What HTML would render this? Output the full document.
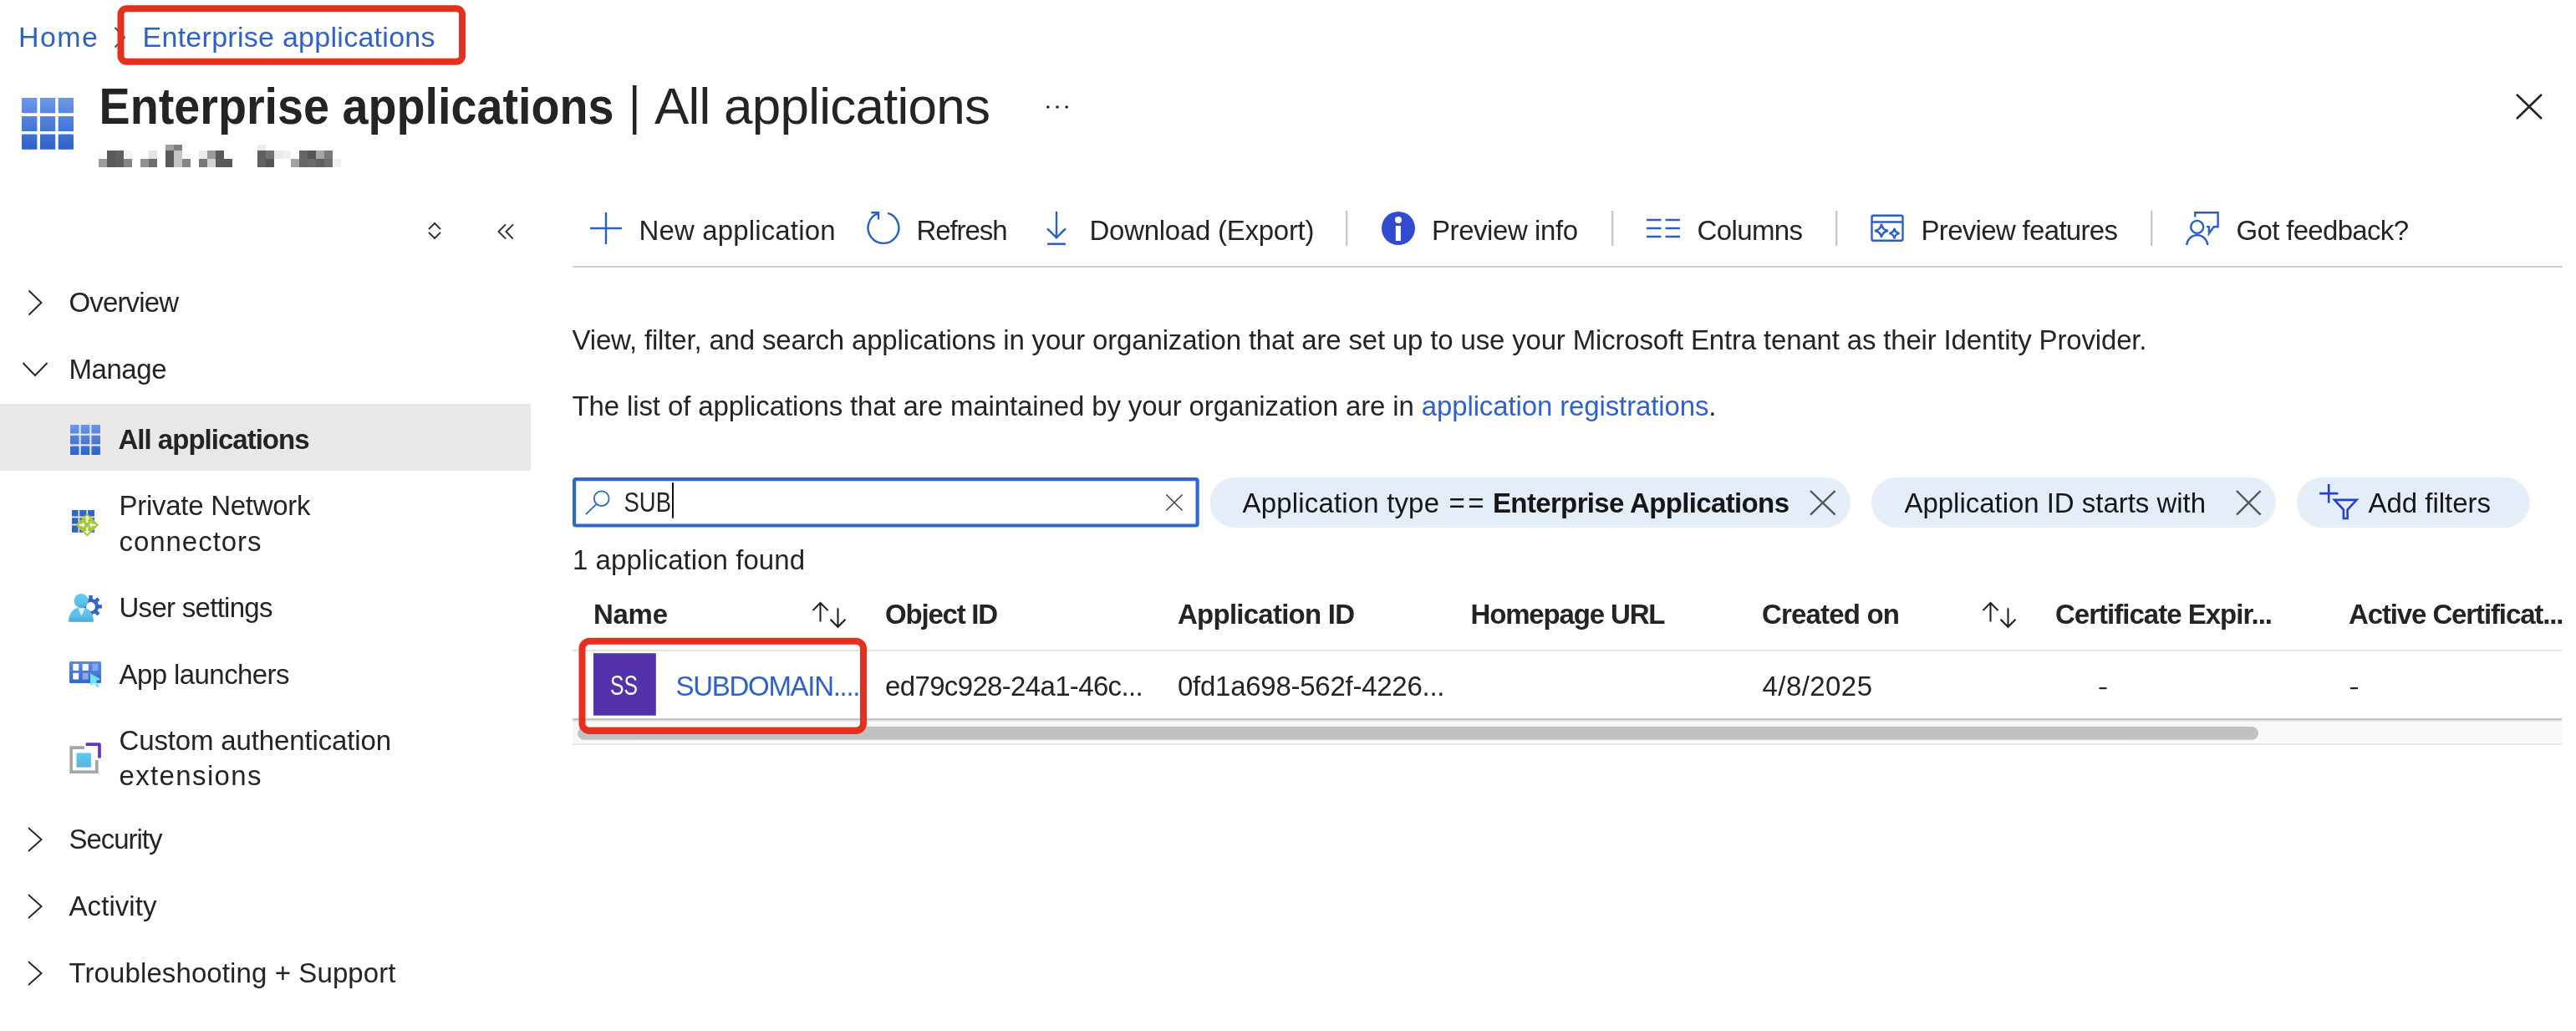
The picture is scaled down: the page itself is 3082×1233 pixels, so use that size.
<!DOCTYPE html>
<html><head><meta charset="utf-8">
<style>
html,body{margin:0;padding:0;background:#fff;width:3082px;height:1233px;overflow:hidden}
svg{display:block;will-change:transform;font-family:"Liberation Sans",sans-serif}
.t{fill:#242424;font-size:33px}
.b{font-weight:700}
.lk{fill:#2f62c8}
.ic{fill:none;stroke:#2b5fc7;stroke-width:2.4}
.dk{fill:none;stroke:#2a2a2a;stroke-width:2}
</style></head><body>
<svg width="3082" height="1233" viewBox="0 0 3082 1233">
<defs>
<linearGradient id="gb" x1="0" y1="0" x2="0" y2="1"><stop offset="0" stop-color="#6a95e8"/><stop offset="1" stop-color="#2f62c8"/></linearGradient>
<linearGradient id="gus" x1="0" y1="0" x2="0" y2="1"><stop offset="0" stop-color="#60c9f0"/><stop offset="0.55" stop-color="#5cc3eb"/><stop offset="1" stop-color="#4ca4d5"/></linearGradient>
<linearGradient id="gush" x1="0" y1="0" x2="0" y2="1"><stop offset="0" stop-color="#62cbf1"/><stop offset="0.6" stop-color="#5cc4ec"/><stop offset="1" stop-color="#52aedc"/></linearGradient>
<linearGradient id="gal" x1="0" y1="0" x2="0" y2="1"><stop offset="0" stop-color="#5b8ce6"/><stop offset="1" stop-color="#3567cb"/></linearGradient>
<linearGradient id="gca" x1="0" y1="0" x2="0" y2="1"><stop offset="0" stop-color="#60c9ef"/><stop offset="1" stop-color="#55b5e0"/></linearGradient>
<linearGradient id="gbt" gradientUnits="userSpaceOnUse" x1="0" y1="117" x2="0" y2="179"><stop offset="0" stop-color="#6b96e9"/><stop offset="1" stop-color="#2f62c8"/></linearGradient>
<linearGradient id="gbn" gradientUnits="userSpaceOnUse" x1="0" y1="508" x2="0" y2="544"><stop offset="0" stop-color="#6b96e9"/><stop offset="1" stop-color="#2f62c8"/></linearGradient>
</defs>
<!-- breadcrumb -->
<text class="t lk" x="22" y="56" style="font-size:34px" textLength="95">Home</text>
<path class="dk" style="stroke:#505050" d="M137.5 33 L149 44.8 L137.5 56.5"/>
<text class="t lk" x="170.5" y="56" style="font-size:34px" textLength="350">Enterprise applications</text>
<rect x="144.5" y="10.3" width="408.5" height="63.4" rx="7" fill="none" stroke="#e3301f" stroke-width="8"/>

<!-- title -->
<g fill="url(#gbt)">
<rect x="26" y="117" width="18.4" height="18.3" rx="1"/><rect x="48" y="117" width="18.2" height="18.3"/><rect x="69.7" y="117" width="18.3" height="18.3" rx="1"/>
<rect x="26" y="139" width="18.4" height="18"/><rect x="48" y="139" width="18.2" height="18"/><rect x="69.7" y="139" width="18.3" height="18"/>
<rect x="26" y="160.5" width="18.4" height="18.2" rx="1"/><rect x="48" y="160.5" width="18.2" height="18.2"/><rect x="69.7" y="160.5" width="18.3" height="18.2" rx="1"/>
</g>
<text class="t b" x="118.5" y="148" style="font-size:62px" textLength="616" lengthAdjust="spacingAndGlyphs">Enterprise applications</text>
<rect x="757" y="102" width="4.5" height="59" fill="#242424"/>
<text class="t" x="783" y="148" style="font-size:62px" textLength="402">All applications</text>
<g fill="#1e1e1e"><circle cx="1253.8" cy="128" r="1.8"/><circle cx="1265" cy="128" r="1.8"/><circle cx="1276.2" cy="128" r="1.8"/></g>
<path d="M3011 113 L3041 142 M3041 113 L3011 142" stroke="#242424" stroke-width="2.6" fill="none"/>

<!-- blurred subtitle -->
<g id="blur" shape-rendering="crispEdges"><rect x="198" y="173" width="10" height="7" fill="#a0a0a0"/><rect x="208" y="173" width="10" height="7" fill="#808080"/><rect x="308" y="173" width="10" height="7" fill="#ececec"/><rect x="118" y="180" width="10" height="10" fill="#fbfbfb"/><rect x="128" y="180" width="10" height="10" fill="#5a5a5a"/><rect x="138" y="180" width="10" height="10" fill="#606060"/><rect x="148" y="180" width="10" height="10" fill="#f4f4f4"/><rect x="168" y="180" width="10" height="10" fill="#fcfcfc"/><rect x="178" y="180" width="10" height="10" fill="#e4e4e4"/><rect x="198" y="180" width="10" height="10" fill="#5a5a5a"/><rect x="208" y="180" width="10" height="10" fill="#c4c4c4"/><rect x="218" y="180" width="10" height="10" fill="#fcfcfc"/><rect x="238" y="180" width="10" height="10" fill="#eaeaea"/><rect x="248" y="180" width="10" height="10" fill="#9a9a9a"/><rect x="258" y="180" width="10" height="10" fill="#5a5a5a"/><rect x="308" y="180" width="10" height="10" fill="#616161"/><rect x="318" y="180" width="10" height="10" fill="#737373"/><rect x="328" y="180" width="10" height="10" fill="#eaeaea"/><rect x="338" y="180" width="10" height="10" fill="#f0f0f0"/><rect x="358" y="180" width="10" height="10" fill="#656565"/><rect x="368" y="180" width="10" height="10" fill="#555555"/><rect x="378" y="180" width="10" height="10" fill="#a5a5a5"/><rect x="388" y="180" width="10" height="10" fill="#7b7b7b"/><rect x="118" y="190" width="10" height="10" fill="#9c9c9c"/><rect x="128" y="190" width="10" height="10" fill="#5a5a5a"/><rect x="138" y="190" width="10" height="10" fill="#5e5e5e"/><rect x="148" y="190" width="10" height="10" fill="#858585"/><rect x="168" y="190" width="10" height="10" fill="#919191"/><rect x="178" y="190" width="10" height="10" fill="#6e6e6e"/><rect x="198" y="190" width="10" height="10" fill="#5a5a5a"/><rect x="208" y="190" width="10" height="10" fill="#c4c4c4"/><rect x="218" y="190" width="10" height="10" fill="#858585"/><rect x="238" y="190" width="10" height="10" fill="#777777"/><rect x="248" y="190" width="10" height="10" fill="#d4d4d4"/><rect x="258" y="190" width="10" height="10" fill="#5a5a5a"/><rect x="268" y="190" width="10" height="10" fill="#5a5a5a"/><rect x="308" y="190" width="10" height="10" fill="#616161"/><rect x="318" y="190" width="10" height="10" fill="#555555"/><rect x="348" y="190" width="10" height="10" fill="#a3a3a3"/><rect x="358" y="190" width="10" height="10" fill="#656565"/><rect x="368" y="190" width="10" height="10" fill="#6a6a6a"/><rect x="378" y="190" width="10" height="10" fill="#606060"/><rect x="388" y="190" width="10" height="10" fill="#6e6e6e"/><rect x="398" y="190" width="10" height="10" fill="#f0f0f0"/></g>

<!-- toolbar -->
<path class="dk" style="stroke:#333" d="M513 274 L520 267 L527 274 M513 278 L520 285 L527 278"/>
<path class="dk" style="stroke:#333" d="M605 268.4 L596.5 277 L605.3 285.6 M614 268.4 L605.5 277 L613.8 285.6"/>
<path class="ic" d="M725 254 V292 M706 273 H744"/>
<text class="t" x="764.5" y="287" textLength="235">New application</text>
<g class="ic"><path d="M1062.1 254.8 A18.4 18.4 0 1 1 1050.9 255.1"/><path d="M1042.3 254.2 H1051 V262.6"/></g>
<text class="t" x="1096.5" y="287" textLength="109">Refresh</text>
<path class="ic" d="M1264 253 V284 M1253 273.3 L1264 284.3 L1275 273.3 M1253 291.7 H1275"/>
<text class="t" x="1303.5" y="287" textLength="269">Download (Export)</text>
<rect x="1610" y="252" width="2.4" height="42" fill="#c8c8c8"/>
<circle cx="1673" cy="273" r="20" fill="#2f4bcf"/><circle cx="1673" cy="263.1" r="4" fill="#fff"/><rect x="1669.8" y="270" width="6.1" height="18" fill="#fff"/>
<text class="t" x="1713" y="287" textLength="175">Preview info</text>
<rect x="1928" y="252" width="2.4" height="42" fill="#c8c8c8"/>
<path class="ic" stroke-width="2.2" d="M1970 263 H1987.5 M1992.5 263 H2010 M1970 273 H1987.5 M1992.5 273 H2010 M1970 283 H1987.5 M1992.5 283 H2010"/>
<text class="t" x="2030.5" y="287" textLength="126.5">Columns</text>
<rect x="2196" y="252" width="2.4" height="42" fill="#c8c8c8"/>
<g class="ic"><rect x="2239.5" y="257.7" width="37" height="30" rx="2"/><path d="M2239.5 265.5 H2276.5"/>
<path d="M2251 268 Q2252 275 2259 276 Q2252 277 2251 284 Q2250 277 2243 276 Q2250 275 2251 268Z"/>
<path d="M2266.5 273 Q2267.3 278.3 2272.6 279.1 Q2267.3 279.9 2266.5 285.2 Q2265.7 279.9 2260.4 279.1 Q2265.7 278.3 2266.5 273Z"/></g>
<text class="t" x="2298.5" y="287" textLength="235.5">Preview features</text>
<rect x="2573" y="252" width="2.4" height="42" fill="#c8c8c8"/>
<g class="ic"><circle cx="2628.7" cy="271.4" r="7.5"/><path d="M2616.2 293 A12.6 13 0 0 1 2641.3 293"/>
<path d="M2626.3 259.6 V254.2 H2653.6 V271.3 H2648.7 L2642.9 279.3 V271.1 H2639.9"/></g>
<text class="t" x="2675.5" y="287" textLength="206.5">Got feedback?</text>
<rect x="685" y="318" width="2381" height="2" fill="#d0d0d0"/>

<!-- left nav -->
<path class="dk" d="M34.5 347.5 L49.5 362 L34.5 376.5"/>
<text class="t" x="82.5" y="373" textLength="131.5">Overview</text>
<path class="dk" d="M27.5 434 L42 449 L56.5 434"/>
<text class="t" x="82.5" y="453" textLength="117">Manage</text>
<rect x="0" y="483" width="635" height="80" fill="#e9e8e6"/>
<g fill="url(#gbn)">
<rect x="84" y="508" width="10.6" height="10.6" rx="1"/><rect x="96.7" y="508" width="10.6" height="10.6"/><rect x="109.4" y="508" width="10.6" height="10.6" rx="1"/>
<rect x="84" y="520.7" width="10.6" height="10.6"/><rect x="96.7" y="520.7" width="10.6" height="10.6"/><rect x="109.4" y="520.7" width="10.6" height="10.6"/>
<rect x="84" y="533.4" width="10.6" height="10.6" rx="1"/><rect x="96.7" y="533.4" width="10.6" height="10.6"/><rect x="109.4" y="533.4" width="10.6" height="10.6" rx="1"/>
</g>
<text class="t b" x="141.5" y="537" textLength="229">All applications</text>
<g id="pnc"><g fill="#3465c0"><rect x="86" y="610" width="7.7" height="7.6"/><rect x="95.1" y="610" width="8.4" height="7.6"/><rect x="105.1" y="610" width="7.9" height="7.6"/>
<rect x="86" y="619.2" width="7.7" height="7.5"/><rect x="95.1" y="619.2" width="8.4" height="7.5"/><rect x="105.1" y="619.2" width="7.9" height="7.5"/>
<rect x="86" y="628.3" width="7.7" height="8.5"/><rect x="95.1" y="628.3" width="8.4" height="8.5"/><rect x="105.1" y="628.3" width="7.9" height="8.5"/></g>
<path d="M104.3 614.2 L117.8 627.7 L104.3 641.2 L90.8 627.7 Z" fill="#a5c83a" stroke="#a5c83a" stroke-width="0.6" stroke-linejoin="round"/>
<g fill="#fff"><rect x="103.3" y="619.5" width="2.1" height="5.5"/><path d="M101.1 620.3 L104.3 616.6 L107.5 620.3Z"/>
<rect x="103.3" y="630.4" width="2.1" height="5.5"/><path d="M101.1 635.2 L104.3 638.9 L107.5 635.2Z"/>
<rect x="94.5" y="626.7" width="5" height="2.1"/><path d="M98.7 624.5 L101.9 627.7 L98.7 630.9Z"/>
<rect x="109.1" y="626.7" width="5.2" height="2.1"/><path d="M109.9 624.5 L106.7 627.7 L109.9 630.9Z"/></g></g>
<text class="t" x="142.5" y="616" textLength="229">Private Network</text>
<text class="t" x="142.5" y="659" textLength="170">connectors</text>
<g id="us"><g fill="#3466c8" transform="translate(108.5 725.4)">
<circle r="9.6"/><rect x="-2.2" y="-13.4" width="4.4" height="26.8"/><rect x="-2.2" y="-13.4" width="4.4" height="26.8" transform="rotate(45)"/><rect x="-2.2" y="-13.4" width="4.4" height="26.8" transform="rotate(90)"/><rect x="-2.2" y="-13.4" width="4.4" height="26.8" transform="rotate(135)"/></g>
<circle cx="108.5" cy="725.4" r="5.5" fill="#fff"/>
<path d="M82.2 743.7 C82 733 88 726.5 97.2 726.3 C106 726.5 112.2 733 112 743.7 Z" fill="url(#gus)"/>
<path d="M93.4 727.2 L101.7 727.2 L97.4 736.8Z" fill="#dff3fb"/>
<circle cx="97.1" cy="718.4" r="8.5" fill="url(#gush)"/></g>
<text class="t" x="142.5" y="737.6" textLength="184">User settings</text>
<g id="al"><rect x="83" y="791" width="38" height="26" rx="1.5" fill="url(#gal)"/>
<g fill="#fff"><rect x="87.3" y="794" width="6.9" height="8"/><rect x="98.7" y="794" width="7" height="8"/><rect x="87.3" y="804.8" width="6.9" height="7.7"/></g>
<g fill="#86a9ee"><rect x="110.5" y="794" width="6.9" height="8"/><rect x="98.7" y="804.8" width="7" height="7.7"/></g>
<path d="M108 805.3 L120.3 812.3 L114.8 814.6 L118.6 820 Q118.8 822.3 116.4 822.5 L112.6 816.8 L108 820 Z" fill="#72e0f9"/></g>
<text class="t" x="142.5" y="818" textLength="204">App launchers</text>
<g id="ca"><path d="M100.9 894.2 H85.2 V923.1 H115.8 V909" fill="none" stroke="#a6a6a6" stroke-width="3.7"/>
<path d="M102.7 890.2 H119 V905" fill="none" stroke="#6b2fd0" stroke-width="3.7" stroke-linejoin="round"/><circle cx="119" cy="905" r="1.85" fill="#6b2fd0"/>
<rect x="91.5" y="900.5" width="17.4" height="17.1" fill="url(#gca)"/></g>
<text class="t" x="142.5" y="897" textLength="325.5">Custom authentication</text>
<text class="t" x="142.5" y="939" textLength="170">extensions</text>
<path class="dk" d="M34 990 L49.5 1004 L34 1018"/>
<text class="t" x="82.5" y="1015" textLength="112">Security</text>
<path class="dk" d="M34 1070 L49.5 1084 L34 1098"/>
<text class="t" x="82.5" y="1095" textLength="105">Activity</text>
<path class="dk" d="M34 1150 L49.5 1164 L34 1178"/>
<text class="t" x="82.5" y="1175" textLength="391">Troubleshooting + Support</text>

<!-- content -->
<text class="t" x="684.5" y="418.3" textLength="1884">View, filter, and search applications in your organization that are set up to use your Microsoft Entra tenant as their Identity Provider.</text>
<text class="t" x="684.5" y="497" textLength="1369">The list of applications that are maintained by your organization are in <tspan class="lk">application registrations</tspan>.</text>

<rect x="687.1" y="573.1" width="745.5" height="55.4" rx="2" fill="#fff" stroke="#3167c9" stroke-width="4.2"/>
<g fill="none" stroke="#2f62c8" stroke-width="1.8"><circle cx="719.7" cy="596.2" r="8.9"/><path d="M713 603.3 L700.9 615.2"/></g>
<text class="t" x="746.5" y="611.8" textLength="56.5" lengthAdjust="spacingAndGlyphs">SUB</text>
<rect x="804" y="577.2" width="2" height="42.5" fill="#111"/>
<path d="M1395.3 591.5 L1414.6 610.5 M1414.6 591.5 L1395.3 610.5" stroke="#444" stroke-width="1.6" fill="none"/>
<text class="t" x="685" y="680.5" textLength="278">1 application found</text>

<rect x="1447.5" y="571" width="766.5" height="60" rx="30" fill="#e4eef9"/>
<text class="t" style="fill:#161616" x="1486.5" y="612.5" textLength="235.5">Application type</text>
<text class="t" style="fill:#161616" x="1733.5" y="612.5" textLength="42">==</text>
<text class="t b" style="fill:#161616" x="1786" y="612.5" textLength="355">Enterprise Applications</text>
<path d="M2166 587 L2195.6 615.7 M2195.6 587 L2166 615.7" stroke="#555" stroke-width="2.4" fill="none"/>
<rect x="2239" y="571" width="483.7" height="60" rx="30" fill="#e4eef9"/>
<text class="t" style="fill:#161616" x="2278.5" y="612.5" textLength="360.5">Application ID starts with</text>
<path d="M2676 587 L2704.6 615.7 M2704.6 587 L2676 615.7" stroke="#555" stroke-width="2.4" fill="none"/>
<rect x="2748" y="571" width="278.6" height="60" rx="30" fill="#e4eef9"/>
<g fill="none" stroke="#2840c8" stroke-width="2.6"><path d="M2786.2 579 V601.4 M2775.2 590.1 H2797.3"/><path d="M2793 597.9 H2819.5 L2808.6 609.6 V620 H2803.9 V609.6 Z"/></g>
<text class="t" style="fill:#161616" x="2833.5" y="612.5" textLength="146.5">Add filters</text>

<!-- table -->
<text class="t b" x="710" y="746" textLength="89">Name</text>
<path class="dk" style="stroke:#1a1a1a" d="M972.4 730.1 L981.5 721 L990.6 730.1 M981.5 721 V743.5 M993.5 740.8 L1002.5 749.8 L1011.5 740.8 M1002.5 749.8 V727.2"/>
<text class="t b" x="1059.1" y="746" textLength="135">Object ID</text>
<text class="t b" x="1409" y="746" textLength="212">Application ID</text>
<text class="t b" x="1759.5" y="746" textLength="233">Homepage URL</text>
<text class="t b" x="2108" y="746" textLength="165">Created on</text>
<path class="dk" style="stroke:#1a1a1a" d="M2372.4 730.1 L2381.5 721 L2390.6 730.1 M2381.5 721 V743.5 M2393.5 740.8 L2402.5 749.8 L2411.5 740.8 M2402.5 749.8 V727.2"/>
<text class="t b" x="2459" y="746" textLength="260">Certificate Expir...</text>
<text class="t b" x="2810" y="746" textLength="257.5">Active Certificat...</text>
<rect x="685" y="777" width="2380" height="2" fill="#e5e4e2"/>
<rect x="710" y="781.2" width="74.8" height="74.5" fill="#5332ab"/>
<text class="t" x="730" y="831.2" fill="#fff" style="fill:#fff" textLength="33" lengthAdjust="spacingAndGlyphs">SS</text>
<text class="t lk" x="808.5" y="831.8" textLength="221">SUBDOMAIN....</text>
<text class="t" x="1059.1" y="831.8" textLength="308.5">ed79c928-24a1-46c...</text>
<text class="t" x="1409" y="831.8" textLength="319.5">0fd1a698-562f-4226...</text>
<text class="t" x="2108.5" y="831.8" textLength="131.5">4/8/2025</text>
<rect x="2511.5" y="822" width="9" height="2.2" fill="#242424"/>
<rect x="2812" y="822" width="9" height="2.2" fill="#242424"/>
<rect x="685" y="861" width="2380" height="28.3" fill="#f8f8f8"/>
<rect x="685" y="859.2" width="2380" height="1.8" fill="#bdbdbd"/>
<rect x="685" y="861" width="2380" height="1.7" fill="#e0e0e0"/>
<rect x="691" y="869.1" width="2011" height="15.7" rx="7.85" fill="#c1c1c1"/>
<rect x="685" y="889.2" width="2380" height="1.8" fill="#e8e8e8"/>
<rect x="696.5" y="766.7" width="336.5" height="107.3" rx="9" fill="none" stroke="#e3301f" stroke-width="8"/>
</svg>
</body></html>
